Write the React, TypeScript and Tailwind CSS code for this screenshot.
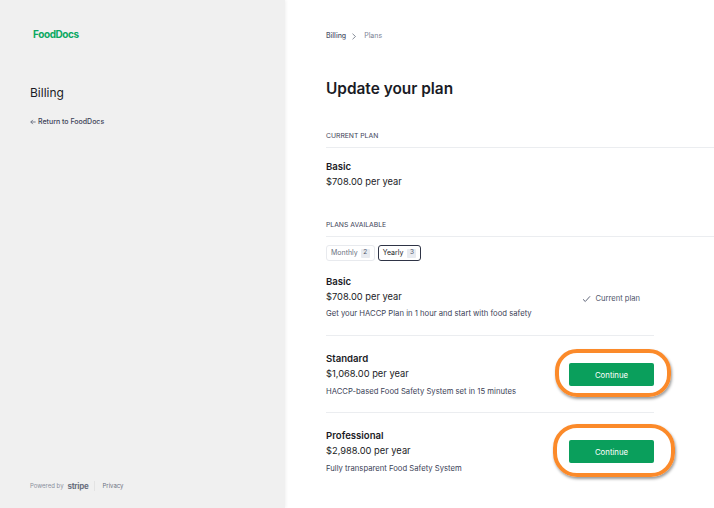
import React from "react";

function Plan({ name, price, desc, children, divider, pb, descMt }: { name: string; price: string; desc: string; children: React.ReactNode; divider?: boolean; pb: string; descMt: string }) {
  return (
    <div className={`flex items-center justify-between ${pb} ${divider ? "border-b border-[#ebedf0]" : ""}`}>
      <div className="flex flex-col">
        <div className="text-[9.6px] leading-[15px] font-semibold text-[#1a1b25]">{name}</div>
        <div className="text-[9.3px] leading-[15px] text-[#1a1b25]">{price}</div>
        <div className={`text-[7.7px] leading-[12px] ${descMt} text-[#3c4257]`}>{desc}</div>
      </div>
      {children}
    </div>
  );
}

function ContinueButton() {
  return (
    <div className="w-[85px] h-[23px] pt-[2px] rounded-[2px] bg-[#0a9f5c] text-white text-[7.8px] flex items-center justify-center">
      Continue
    </div>
  );
}

export default function App() {
  return (
    <div className="relative flex w-[714px] h-[508px] overflow-hidden bg-white font-['Inter',sans-serif]">
      <aside className="w-[285px] shrink-0 h-full bg-[#f0f0f0] shadow-[1px_0_3px_rgba(0,0,0,0.06)] pl-[30px] pt-[27px] pb-[17px] flex flex-col">
        <div className="ml-[3px] h-[14px] text-[10px] leading-[14px] font-bold tracking-[-0.4px] text-[#0aa862]">FoodDocs</div>
        <div className="mt-[44px] text-[12px] leading-[16px] text-[#1a1b25]">Billing</div>
        <div className="mt-[16px] flex items-center gap-[2px] text-[7px] leading-[10px] font-medium text-[#3c4257]">
          <svg width="6" height="6" viewBox="0 0 8 8" fill="none" stroke="#4f566b" strokeWidth="1">
            <path d="M7.5 4H1M3.8 1.2L1 4l2.8 2.8" />
          </svg>
          <span>Return to FoodDocs</span>
        </div>
        <div className="mt-auto flex items-center text-[6px] leading-[10px] text-[#8a8f9c]">
          <span>Powered by</span>
          <span className="ml-[4px] text-[8px] font-bold tracking-[-0.3px] text-[#6b7080]">stripe</span>
          <span className="ml-[6px] w-px h-[10px] bg-[#e3e3e3]" />
          <span className="ml-[7px] text-[#6b7080]">Privacy</span>
        </div>
      </aside>

      <main className="flex-1 min-w-0 pl-[41px] pt-[31px]">
        <div className="flex items-center h-[10px] text-[7px] leading-[10px] font-medium text-[#4f566b]">
          <span>Billing</span>
          <svg className="mx-[5px]" width="6" height="7" viewBox="0 0 6 7" fill="none" stroke="#6b7280" strokeWidth="0.8">
            <path d="M1.5 0.7L4.5 3.5L1.5 6.3" />
          </svg>
          <span className="ml-[2px] font-normal text-[#7a8194]">Plans</span>
        </div>

        <h1 className="mt-[37px] text-[15.4px] leading-[22px] font-semibold text-[#1a1b25]">Update your plan</h1>

        <div className="mt-[31px] text-[6.8px] leading-[10px] text-[#3c4257] pb-[6px] border-b border-[#ebedf0]">CURRENT PLAN</div>
        <div className="mt-[11px] text-[9.6px] leading-[15px] font-semibold text-[#1a1b25]">Basic</div>
        <div className="text-[9.3px] leading-[15px] text-[#1a1b25]">$708.00 per year</div>

        <div className="mt-[31px] text-[6.8px] leading-[10px] text-[#3c4257] pb-[6px] border-b border-[#ebedf0]">PLANS AVAILABLE</div>

        <div className="mt-[8px] flex items-center gap-[3px]">
          <div className="h-[16px] px-[4px] flex items-center gap-[3px] rounded-[3px] border border-[#e8eaee] text-[7px] text-[#6b7280]">
            Monthly
            <span className="w-[9px] h-[9px] rounded-[1px] bg-[#e8ebf0] text-[6.5px] flex items-center justify-center text-[#4f566b]">2</span>
          </div>
          <div className="h-[16px] px-[4px] flex items-center gap-[4px] rounded-[3px] border border-[#2f3446] text-[7px] text-[#1a1b25]">
            Yearly
            <span className="w-[9px] h-[9px] rounded-[1px] bg-[#e8ebf0] text-[6.5px] flex items-center justify-center text-[#4f566b]">3</span>
          </div>
        </div>

        <div className="mt-[13px] w-[328px]">
          <Plan name="Basic" price="$708.00 per year" desc="Get your HACCP Plan in 1 hour and start with food safety" divider pb="pb-[15px]" descMt="mt-[4px]">
            <div className="mr-[14px] pt-[4px] flex items-center gap-[4px] text-[7.6px] text-[#4f566b]">
              <svg width="9" height="8" viewBox="0 0 9 8" fill="none" stroke="#4f566b" strokeWidth="0.9">
                <path d="M1 4.3L3.3 6.5L8 1.3" />
              </svg>
              Current plan
            </div>
          </Plan>
          <div className="h-[15px]" />
          <Plan name="Standard" price="$1,068.00 per year" desc="HACCP-based Food Safety System set in 15 minutes" divider pb="pb-[14px]" descMt="mt-[5px]">
            <ContinueButton />
          </Plan>
          <div className="h-[15px]" />
          <Plan name="Professional" price="$2,988.00 per year" desc="Fully transparent Food Safety System" pb="pb-0" descMt="mt-[5px]">
            <ContinueButton />
          </Plan>
        </div>
      </main>

      <div className="absolute left-[555px] top-[349px] w-[116px] h-[48px] rounded-[22px] border-4 border-[#fb8a2a] shadow-[1px_2px_3px_rgba(0,0,0,0.4)]" />
      <div className="absolute left-[553px] top-[424px] w-[122px] h-[53px] rounded-[24px] border-4 border-[#fb8a2a] shadow-[1px_2px_3px_rgba(0,0,0,0.4)]" />
    </div>
  );
}
